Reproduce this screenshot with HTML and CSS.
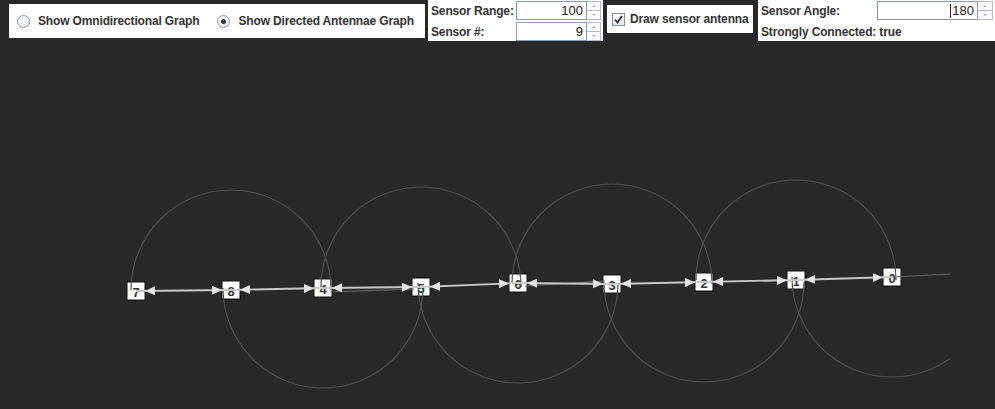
FILE: index.html
```html
<!DOCTYPE html>
<html>
<head>
<meta charset="utf-8">
<link rel="stylesheet" href="styles.css">
</head>
<body>
<div class="top">
  <div class="panel radios">
    <label class="radio"><span class="rb"></span><span>Show Omnidirectional Graph</span></label>
    <label class="radio"><span class="rb on"></span><span>Show Directed Antennae Graph</span></label>
  </div>
  <div class="panel spins">
    <span class="lbl">Sensor Range:</span>
    <div class="field"><span class="val">100</span></div>
    <div class="btns"><span class="btn up"></span><span class="btn dn"></span></div>
    <span class="lbl">Sensor #:</span>
    <div class="field"><span class="val">9</span></div>
    <div class="btns"><span class="btn up"></span><span class="btn dn"></span></div>
  </div>
  <div class="panel check">
    <span class="cb"><svg width="11" height="11" viewBox="0 0 11 11"><path d="M2 5.5 L4.5 8.5 L9 2" fill="none" stroke="#333" stroke-width="1.8"/></svg></span>
    <span>Draw sensor antenna</span>
  </div>
  <div class="panel angle">
    <span class="lbl">Sensor Angle:</span>
    <div class="field"><span class="caret"></span><span class="val">180</span></div>
    <div class="btns"><span class="btn up"></span><span class="btn dn"></span></div>
    <span class="lbl wide">Strongly Connected: true</span>
  </div>
</div>
<svg class="canvas" width="995" height="368" viewBox="0 41 995 368">
  <defs>
    <marker id="ah" markerUnits="userSpaceOnUse" markerWidth="20" markerHeight="10" refX="19" refY="5" orient="auto-start-reverse">
      <path d="M0,0.5 L10,5 L0,9.5 z" fill="#e4e4e4"/>
    </marker>
    <clipPath id="clip"><rect x="0" y="41" width="950" height="368"/></clipPath>
  </defs>
  <g class="nodes">
    <rect x="127" y="282" width="18" height="18"/>
    <rect x="222" y="281" width="18" height="18"/>
    <rect x="314" y="279" width="18" height="18"/>
    <rect x="412" y="278" width="18" height="18"/>
    <rect x="509" y="274" width="18" height="18"/>
    <rect x="603" y="275" width="18" height="18"/>
    <rect x="695" y="273" width="18" height="18"/>
    <rect x="787" y="271" width="18" height="18"/>
    <rect x="883" y="268" width="18" height="18"/>
  </g>
  <g class="labels">
    <text x="136" y="292">7</text>
    <text x="231" y="291">8</text>
    <text x="323" y="289">4</text>
    <text x="421" y="288">5</text>
    <text x="518" y="284">6</text>
    <text x="612" y="285">3</text>
    <text x="704" y="283">2</text>
    <text x="796" y="281">1</text>
    <text x="892" y="278">0</text>
  </g>
  <g class="arcs" clip-path="url(#clip)">
    <path d="M131,290 A100,100 0 0 1 331,290"/>
    <path d="M223,288 A100,100 0 0 0 423,288"/>
    <path d="M321,287 A100,100 0 0 1 521,287"/>
    <path d="M418,283 A100,100 0 0 0 618,283"/>
    <path d="M512,284 A100,100 0 0 1 712,284"/>
    <path d="M604,282 A100,100 0 0 0 804,282"/>
    <path d="M696,280 A100,100 0 0 1 896,280"/>
    <path d="M792,277 A100,100 0 0 0 992,277"/>
  </g>
  <g class="faint">
    <line x1="330" y1="292" x2="414" y2="289"/>
    <line x1="525" y1="286" x2="605" y2="281"/>
    <line x1="892" y1="277" x2="950" y2="274"/>
  </g>
  <g class="edges">
    <line x1="136" y1="291" x2="231" y2="290"/>
    <line x1="231" y1="290" x2="323" y2="288"/>
    <line x1="323" y1="288" x2="421" y2="287"/>
    <line x1="421" y1="287" x2="518" y2="283"/>
    <line x1="518" y1="283" x2="612" y2="284"/>
    <line x1="612" y1="284" x2="704" y2="282"/>
    <line x1="704" y1="282" x2="796" y2="280"/>
    <line x1="796" y1="280" x2="892" y2="277"/>
  </g>
</svg>
</body>
</html>
```
FILE: styles.css
```css
html, body {
  margin: 0;
  padding: 0;
  background: #282828;
}
body {
  width: 995px;
  height: 409px;
  overflow: hidden;
  font-family: "Liberation Sans", Arial, sans-serif;
  font-weight: bold;
  font-size: 12px;
  letter-spacing: -0.15px;
  color: #333;
}
.top {
  display: flex;
  align-items: flex-start;
  height: 41px;
}
.panel {
  background: #fff;
  box-sizing: border-box;
}
.radios {
  margin-left: 9px;
  margin-top: 4px;
  width: 416px;
  height: 34px;
  display: flex;
  align-items: center;
  padding-left: 8px;
  gap: 18px;
}
.radio {
  display: flex;
  align-items: center;
  gap: 8px;
}
.rb {
  width: 11px;
  height: 11px;
  border-radius: 50%;
  border: 1px solid #8c9aa8;
  background: radial-gradient(circle at 40% 35%, #ffffff 0%, #f1f5f9 50%, #d7e0ea 100%);
  display: flex;
  align-items: center;
  justify-content: center;
}
.rb.on::after {
  content: "";
  width: 5px;
  height: 5px;
  border-radius: 50%;
  background: #333;
}
.spins {
  margin-left: 3px;
  width: 175px;
  height: 41px;
  display: grid;
  grid-template-columns: 85px 71px 14px;
  grid-template-rows: 19px 19px;
  row-gap: 2px;
  padding: 1px 0 0 3px;
  align-items: center;
}
.field {
  height: 19px;
  box-sizing: border-box;
  border: 1px solid #8a9bb0;
  display: flex;
  align-items: center;
  justify-content: flex-end;
  padding-right: 3px;
  font-weight: normal;
  font-size: 13px;
  letter-spacing: 0;
  color: #222;
}
.btns {
  height: 19px;
  display: flex;
  flex-direction: column;
}
.btn {
  flex: 1;
  box-sizing: border-box;
  border: 1px solid #b4bfcb;
  border-left: none;
  background: #fbfcfd;
  display: flex;
  align-items: center;
  justify-content: center;
}
.btn.dn { border-top: none; }
.btn.up::after {
  content: "";
  border-left: 2px solid transparent;
  border-right: 2px solid transparent;
  border-bottom: 2px solid #a8b2bc;
}
.btn.dn::after {
  content: "";
  border-left: 2px solid transparent;
  border-right: 2px solid transparent;
  border-top: 2px solid #a8b2bc;
}
.check {
  margin-left: 4px;
  margin-top: 5px;
  width: 146px;
  height: 28px;
  display: flex;
  align-items: center;
  padding-left: 5px;
  gap: 5px;
}
.cb {
  width: 13px;
  height: 13px;
  box-sizing: border-box;
  border: 1px solid #7f8d9b;
  background: linear-gradient(#ffffff, #dfe6ee);
  display: flex;
  align-items: center;
  justify-content: center;
}
.angle {
  margin-left: 5px;
  width: 237px;
  height: 41px;
  display: grid;
  grid-template-columns: 116px 101px 15px;
  grid-template-rows: 19px 19px;
  row-gap: 2px;
  padding: 1px 0 0 3px;
  align-items: center;
}
.lbl.wide {
  grid-column: 1 / 4;
}
.caret {
  width: 1px;
  height: 14px;
  background: #222;
  margin-right: 1px;
}
.canvas {
  display: block;
}
.nodes rect {
  fill: #fff;
  stroke: #111;
  stroke-width: 1;
}
.labels text {
  font-family: "Liberation Sans", Arial, sans-serif;
  font-weight: bold;
  font-size: 13px;
  fill: #333;
  text-anchor: middle;
  dominant-baseline: central;
}
.arcs path {
  fill: none;
  stroke: #4e4e4e;
  stroke-width: 1.2;
}
.faint line {
  stroke: #6a6a6a;
  stroke-width: 1;
}
.edges line {
  stroke: #c8c8c8;
  stroke-width: 1.8;
  marker-start: url(#ah);
  marker-end: url(#ah);
}
```
